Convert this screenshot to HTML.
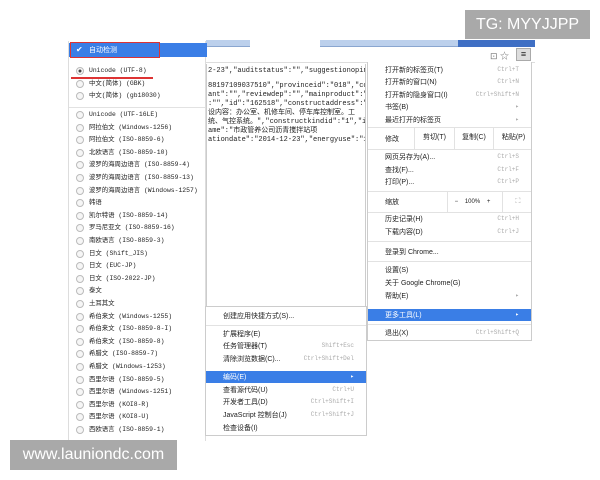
<!DOCTYPE html>
<html><head><meta charset="utf-8"><style>
*{margin:0;padding:0;box-sizing:border-box}
body{width:600px;height:480px;background:#fff;position:relative;overflow:hidden;font-family:"Liberation Sans","Noto Sans CJK SC",sans-serif;font-size:7px;color:#222}
.a{position:absolute;white-space:nowrap}
.r{position:absolute;left:0;right:0;height:12px;line-height:12px}
.rad{position:absolute;left:7px;top:2px;width:8px;height:8px;border:1px solid #bbb;border-radius:50%;background:#f6f6f6}
.lt{position:absolute;left:20px;font-size:6.4px}
.sep{position:absolute;left:0;right:0;height:1px;background:#e2e2e2}
.mono{font-family:"Liberation Mono","Noto Sans CJK SC",monospace}
</style></head><body>
<div class="a" style="left:206px;top:40px;width:329px;height:7px;background:#bcd0ec;border-bottom:1px solid #8aa6d0"></div>
<div class="a" style="left:250px;top:40px;width:70px;height:7px;background:#fff"></div>
<div class="a" style="left:458px;top:40px;width:77px;height:7px;background:#3f6fc4"></div>
<div class="a" style="left:206px;top:48px;width:329px;height:15px;background:#fff;border-bottom:1px solid #ddd"></div>
<div class="a" style="left:490px;top:49px;font-size:9px;color:#777">⊡ ☆</div>
<div class="a" style="left:516px;top:48px;width:15px;height:13px;background:#ddd;border:1px solid #aaa;font-size:9px;line-height:11px;text-align:center">≡</div>
<div class="a mono" style="left:206px;top:64px;width:160px;height:243px;border:1px solid #ccc;border-top:none;overflow:hidden;font-size:7px;line-height:9px;padding-left:1px;color:#222">
<div style="margin-top:3px">2-23","auditstatus":"","suggestionopinion"</div>
<div style="margin-top:6px">88197109037510","provinceid":"018","comu</div>
<div>ant":"","reviewdep":"","mainproduct":"","</div>
<div>:"","id":"162518","constructaddress":"济南</div>
<div>设内容：办公室、机修车间、停车库控制室。工</div>
<div>统、气控系统。","constructkindid":"1","inc</div>
<div>ame":"市政管养公司沥青搅拌站项</div>
<div>ationdate":"2014-12-23","energyuse":"100</div>
</div>
<div class="a" style="left:68px;top:41px;width:138px;height:400px;background:#fff;border-left:1px solid #ddd;border-right:1px solid #ddd">
<div class="a" style="left:0;top:2px;width:138px;height:14px;background:#3a7ee6"></div>
<div class="a" style="left:1px;top:1px;width:90px;height:16px;border:1.5px solid #d33"></div>
<div class="a" style="left:7px;top:4px;color:#fff;font-size:8px">✔</div>
<div class="a" style="left:20px;top:4px;color:#fff">自动检测</div>
<div id="enc"></div>
<div class="a" style="left:2px;top:36px;width:82px;height:1.5px;background:#d33"></div>
</div>
<div class="a" style="left:367px;top:62px;width:165px;height:279px;background:#fff;border:1px solid #ccc;border-top:none" id="cm"></div>
<div class="a" style="left:205px;top:306px;width:162px;height:130px;background:#fff;border:1px solid #ccc" id="sm"></div>
<div class="a" style="left:465px;top:10px;width:125px;height:29px;background:#a9a9a9;color:#fff;font-size:16px;line-height:29px;text-align:center">TG: MYYJJPP</div>
<div class="a" style="left:10px;top:440px;width:167px;height:30px;background:#a9a9a9;color:#fff;font-size:16px;line-height:30px;text-align:center">www.launiondc.com</div>
<script>
(function(){
var e=document.getElementById('enc'),h='';
function row(y,t,c){return '<div class="r" style="top:'+(y-6)+'px"><span class="rad" style="'+(c?'background:radial-gradient(#444 30%,#f6f6f6 40%)':'')+'"></span><span class="lt mono">'+t+'</span></div>';}
var firstItems=[['Unicode (UTF-8)',1],['中文(简体) (GBK)'],['中文(简体) (gb18030)']];
firstItems.forEach(function(t,i){h+=row(30+i*12.6,t[0],t[1]);});
h+='<div class="sep" style="top:66px"></div>';
var L=['Unicode (UTF-16LE)','阿拉伯文 (Windows-1256)','阿拉伯文 (ISO-8859-6)','北欧语言 (ISO-8859-10)','波罗的海周边语言 (ISO-8859-4)','波罗的海周边语言 (ISO-8859-13)','波罗的海周边语言 (Windows-1257)','韩语','凯尔特语 (ISO-8859-14)','罗马尼亚文 (ISO-8859-16)','南欧语言 (ISO-8859-3)','日文 (Shift_JIS)','日文 (EUC-JP)','日文 (ISO-2022-JP)','泰文','土耳其文','希伯来文 (Windows-1255)','希伯来文 (ISO-8859-8-I)','希伯来文 (ISO-8859-8)','希腊文 (ISO-8859-7)','希腊文 (Windows-1253)','西里尔语 (ISO-8859-5)','西里尔语 (Windows-1251)','西里尔语 (KOI8-R)','西里尔语 (KOI8-U)','西欧语言 (ISO-8859-1)'];
L.forEach(function(t,i){h+=row(74+i*12.6,t);});
e.innerHTML=h;
function menu(id,items,off){var s='';items.forEach(function(it){
 if(it[0]=='sep'){s+='<div class="sep" style="top:'+(it[1]-off)+'px"></div>';return;}
 var y=it[1]-off;
 if(it[3])s+='<div class="a" style="left:0;right:0;top:'+(y-6)+'px;height:12px;background:#3a7ee6"></div>';
 s+='<div class="a" style="left:17px;top:'+(y-5)+'px;'+(it[3]?'color:#fff':'')+'">'+it[0]+'</div>';
 if(it[2])s+='<div class="a mono" style="right:12px;top:'+(y-4)+'px;color:'+(it[3]?'#fff':'#aaa')+';font-size:6px">'+it[2]+'</div>';
});document.getElementById(id).innerHTML=s;}
menu('cm',[['打开新的标签页(T)',70,'Ctrl+T'],['打开新的窗口(N)',82,'Ctrl+N'],['打开新的隐身窗口(I)',95,'Ctrl+Shift+N'],['书签(B)',107,'▸'],['最近打开的标签页',120,'▸'],['sep',127],
['修改',139],['sep',149],['网页另存为(A)...',157,'Ctrl+S'],['查找(F)...',170,'Ctrl+F'],['打印(P)...',182,'Ctrl+P'],['sep',191],['缩放',202],['sep',212],
['历史记录(H)',219,'Ctrl+H'],['下载内容(D)',232,'Ctrl+J'],['sep',241],['登录到 Chrome...',252],['sep',261],['设置(S)',270],['关于 Google Chrome(G)',283],['帮助(E)',296,'▸'],['更多工具(L)',315,'▸',1],['sep',324],['退出(X)',333,'Ctrl+Shift+Q']],62);
var cm=document.getElementById('cm');
cm.innerHTML+='<div class="a" style="left:46px;top:66px;height:21px;border-left:1px solid #e2e2e2;width:40px;text-align:center;line-height:20px">剪切(T)</div><div class="a" style="left:86px;top:66px;height:21px;border-left:1px solid #e2e2e2;width:39px;text-align:center;line-height:20px">复制(C)</div><div class="a" style="left:125px;top:66px;height:21px;border-left:1px solid #e2e2e2;width:40px;text-align:center;line-height:20px">粘贴(P)</div>'+
'<div class="a" style="left:79px;top:130px;height:20px;border-left:1px solid #e2e2e2;width:55px;line-height:20px;font-size:6px">&nbsp;&nbsp;&nbsp;&nbsp;−&nbsp;&nbsp;&nbsp;&nbsp;100%&nbsp;&nbsp;&nbsp;&nbsp;+</div><div class="a" style="left:134px;top:130px;height:20px;border-left:1px solid #e2e2e2;width:31px;line-height:20px;text-align:center;color:#999">⛶</div>';
menu('sm',[['创建应用快捷方式(S)...',315],['sep',324],['扩展程序(E)',333],['任务管理器(T)',345,'Shift+Esc'],['清除浏览数据(C)...',358,'Ctrl+Shift+Del'],['编码(E)',376,'▸',1],['查看源代码(U)',389,'Ctrl+U'],['开发者工具(D)',401,'Ctrl+Shift+I'],['JavaScript 控制台(J)',414,'Ctrl+Shift+J'],['检查设备(I)',427]],306);
})();
</script>
</body></html>
